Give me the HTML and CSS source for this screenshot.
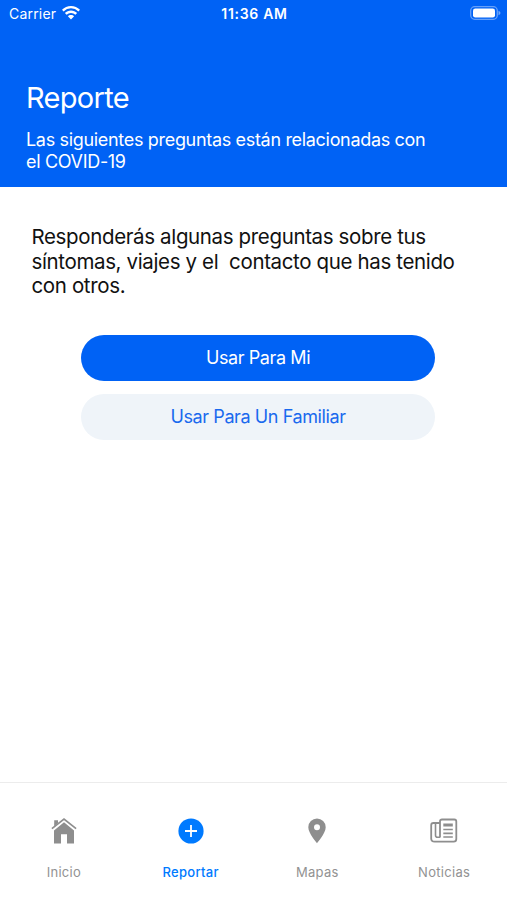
FILE: index.html
```html
<!DOCTYPE html>
<html lang="es">
<head>
<meta charset="utf-8">
<title>Reporte</title>
<link rel="stylesheet" href="styles.css">
</head>
<body>
<div class="app">
  <header class="header">
    <div class="status">
      <div class="carrier"><span>Carrier</span>
        <svg class="wifi" width="18" height="14" viewBox="0 0 18 14"><path fill="#fff" d="M9 0C5.500 0 2.400 1.400 0 3.700L1.600 5.400A10.500 10.500 0 0 1 16.400 5.400L18 3.700C15.600 1.400 12.500 0 9 0ZM9 4.600C6.600 4.600 4.500 5.500 2.900 7L4.600 8.700A6.300 6.300 0 0 1 13.400 8.700L15.100 7C13.500 5.500 11.400 4.600 9 4.600ZM9 9.100C7.700 9.100 6.600 9.600 5.900 10.300L9 13.500L12.100 10.300C11.400 9.600 10.300 9.100 9 9.100Z"/></svg>
      </div>
      <div class="time">11:36 AM</div>
      <svg class="battery" width="31" height="14" viewBox="0 0 31 14"><rect x=".7" y=".7" width="26.600" height="12.600" rx="4" fill="none" stroke="#fff" stroke-opacity=".4" stroke-width="1.300"/><rect x="3" y="2.500" width="22" height="9" rx="2.300" fill="#fff"/><path d="M28.500 4.800v4.400q2-.8 2-2.200t-2-2.200z" fill="#fff" fill-opacity=".45"/></svg>
    </div>
    <h1 class="title">Reporte</h1>
    <p class="subtitle">Las siguientes preguntas están relacionadas con<br>el COVID-19</p>
  </header>
  <main class="main">
    <p class="intro">Responderás algunas preguntas sobre tus
síntomas, viajes y el  contacto que has tenido
con otros.</p>
    <div class="actions">
      <button class="button primary">Usar Para Mi</button>
      <button class="button secondary">Usar Para Un Familiar</button>
    </div>
  </main>
  <nav class="tabs">
    <a class="tab">
      <svg width="28" height="28" viewBox="0 0 28 28" fill="#8e8e8e"><path d="M4 13.600 14 5.300 24 13.600V26.500H17V17.300H11V26.500H4Z"/><path d="M4.200 3.300H8V6L4.200 9.200Z"/><path d="M1.900 11.600 14 2 26.100 11.600" fill="none" stroke="#8e8e8e" stroke-width="1.700"/></svg>
      <span>Inicio</span>
    </a>
    <a class="tab active">
      <svg width="28" height="28" viewBox="0 0 28 28"><circle cx="14" cy="14" r="12.600" fill="#007aff"/><path d="M14 8v12M8 14h12" stroke="#fff" stroke-width="1.800"/></svg>
      <span>Reportar</span>
    </a>
    <a class="tab">
      <svg width="28" height="28" viewBox="0 0 28 28"><path fill="#8e8e8e" fill-rule="evenodd" d="M14 1.500a8.700 8.700 0 0 0-8.700 8.700c0 6.200 8.700 16 8.700 16s8.700-9.800 8.700-16A8.700 8.700 0 0 0 14 1.500Zm0 5.700a3 3 0 1 1 0 6a3 3 0 0 1 0-6Z"/></svg>
      <span>Mapas</span>
    </a>
    <a class="tab">
      <svg width="28" height="28" viewBox="0 0 28 28" fill="none" stroke="#8e8e8e" stroke-width="1.800"><path d="M10 20.500V4.300Q10 2.500 12 2.500H24.300Q26.300 2.500 26.300 4.500V22Q26.300 24.700 23.700 24.700H4.700Q1.200 24.700 1.200 21.500V8.200Q1.200 6 3.400 6H10"/><path d="M5.500 6V18.300Q5.500 20.300 7.500 20.300H10" stroke-width="1.600"/><path d="M13.300 8H22.800" stroke-width="3"/><path d="M13.300 12.500H22.800M13.300 16.300H22.800M13.300 20H22.800" stroke-width="1.700"/></svg>
      <span>Noticias</span>
    </a>
  </nav>
</div>
</body>
</html>
```
FILE: styles.css
```css
* { box-sizing: border-box; }
body {
  margin: 0;
  background: #fff;
  font-family: Inter, "Liberation Sans", sans-serif;
}
.app {
  display: flex;
  flex-direction: column;
  width: 507px;
  height: 900px;
  overflow: hidden;
}
.header {
  height: 187px;
  background: #0062f5;
  color: #fff;
}
.status {
  display: grid;
  grid-template-columns: 1fr auto 1fr;
  align-items: center;
  height: 27px;
  padding: 0 6px 0 9px;
  font-size: 14px;
}
.carrier { display: flex; align-items: center; gap: 6px; letter-spacing: 0.2px; }
.wifi { margin-top: -1px; }
.time { font-weight: 600; font-size: 14px; letter-spacing: 0.7px; margin-left: -1px; }
.battery { justify-self: end; margin-top: -1px; }
.title {
  margin: 53px 0 0 26px;
  font-size: 29px;
  font-weight: 400;
  line-height: 36px;
  letter-spacing: -0.7px;
}
.subtitle {
  margin: 13px 0 0 26px;
  font-size: 18px;
  line-height: 21.5px;
  letter-spacing: -0.32px;
  white-space: nowrap;
}
.main { flex: 1; }
.intro {
  margin: 38px 0 0 31.5px;
  color: #111;
  font-size: 20.5px;
  line-height: 24.7px;
  letter-spacing: -0.36px;
  white-space: pre;
}
.actions {
  display: flex;
  flex-direction: column;
  gap: 13px;
  width: 354px;
  margin: 36px 0 0 81px;
}
.button {
  height: 46px;
  padding: 0 0 1px;
  border: 0;
  border-radius: 23px;
  font-family: inherit;
  font-size: 18px;
  letter-spacing: -0.4px;
}
.primary { background: #0062f5; color: #fff; }
.secondary { background: #eff4f9; color: #1969ee; }
.tabs {
  display: grid;
  grid-template-columns: repeat(4, 1fr);
  height: 118px;
  border-top: 1px solid #ececec;
}
.tab {
  display: flex;
  flex-direction: column;
  align-items: center;
  padding: 34px 0 0 1px;
  gap: 18px;
  color: #929292;
  font-size: 13px;
  line-height: 18px;
  letter-spacing: 0.3px;
}
.active { color: #007aff; font-weight: 500; }
```
